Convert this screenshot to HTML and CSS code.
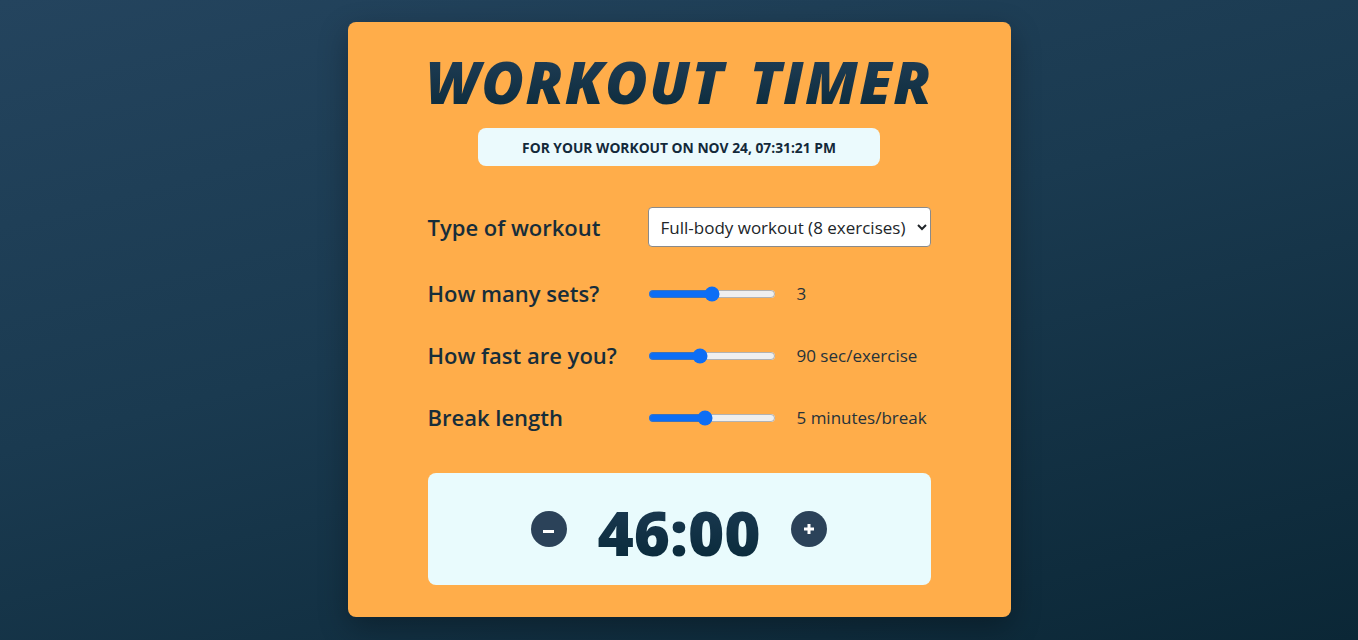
FILE: index.html
```html
<!DOCTYPE html>
<html lang="en">
<head>
<meta charset="utf-8">
<title>Workout Timer</title>
<link rel="stylesheet" href="styles.css">
</head>
<body>
<main class="card">
  <h1 class="title">WORKOUT TIMER</h1>
  <div class="subtitle-wrap">
    <p class="subtitle">For your workout on Nov 24, 07:31:21 PM</p>
  </div>
  <form class="settings">
    <label class="label" for="type">Type of workout</label>
    <select id="type" class="select">
      <option>Full-body workout (8 exercises)</option>
    </select>

    <label class="label" for="sets">How many sets?</label>
    <div class="control">
      <input id="sets" class="range" type="range" min="1" max="5" value="3">
      <span class="value">3</span>
    </div>

    <label class="label" for="speed">How fast are you?</label>
    <div class="control">
      <input id="speed" class="range" type="range" min="30" max="180" step="30" value="90">
      <span class="value">90 sec/exercise</span>
    </div>

    <label class="label" for="break">Break length</label>
    <div class="control">
      <input id="break" class="range" type="range" min="1" max="10" value="5">
      <span class="value">5 minutes/break</span>
    </div>
  </form>
  <section class="timer">
    <button class="round-btn" type="button" aria-label="Decrease">
      <svg viewBox="0 0 36 36" width="36" height="36"><rect x="12" y="19" width="11" height="3" fill="#ffffff"/></svg>
    </button>
    <p class="time">46:00</p>
    <button class="round-btn" type="button" aria-label="Increase">
      <svg viewBox="0 0 36 36" width="36" height="36"><rect x="13" y="16.5" width="10" height="3" fill="#ffffff"/><rect x="16.5" y="13" width="3" height="10" fill="#ffffff"/></svg>
    </button>
  </section>
</main>
</body>
</html>
```

FILE: styles.css
```css
* { box-sizing: border-box; }

html, body { height: 100%; }

body {
  margin: 0;
  min-height: 640px;
  background: linear-gradient(165deg, #24445e 0%, #1a3a50 45%, #0b2736 100%);
  display: flex;
  justify-content: center;
  align-items: flex-start;
  padding-top: 22px;
  font-family: "Open Sans", "Noto Sans", "Liberation Sans", sans-serif;
  color: #1b2f3b;
}

.card {
  width: 663px;
  background: #ffad4a;
  border-radius: 8px;
  padding: 26px 80px 32px;
  box-shadow: 0 10px 30px rgba(0, 0, 0, 0.3);
}

.title {
  margin: 0 -20px;
  text-align: center;
  white-space: nowrap;
  font-family: "Open Sans", "Noto Sans", sans-serif;
  font-style: italic;
  font-weight: 800;
  font-stretch: 100%;
  font-size: 58px;
  line-height: 68px;
  letter-spacing: 1.5px;
  word-spacing: 8px;
  background: linear-gradient(180deg, #223f58 0%, #0b2a3a 100%);
  -webkit-background-clip: text;
  background-clip: text;
  color: transparent;
}

.subtitle-wrap {
  display: flex;
  justify-content: center;
  margin-top: 12px;
}

.subtitle {
  margin: 0;
  width: 402px;
  height: 38px;
  display: flex;
  align-items: center;
  justify-content: center;
  background: #ebfafd;
  border-radius: 8px;
  font-size: 13.8px;
  font-weight: 700;
  text-transform: uppercase;
  color: #13293a;
}

.settings {
  margin-top: 41px;
  display: grid;
  grid-template-columns: 220px 1fr;
  row-gap: 31px;
  align-items: center;
}

.label {
  font-size: 22px;
  font-weight: 600;
  line-height: 31px;
  color: #172d3a;
}

.select {
  width: 283px;
  height: 40px;
  font-family: "Open Sans", "Noto Sans", sans-serif;
  font-size: 17px;
  color: #212529;
  background: #ffffff;
  border: 1px solid #8a8a8a;
  border-radius: 4px;
  padding: 0 4px 0 8px;
}

.control {
  display: flex;
  align-items: center;
  gap: 21px;
}

.range {
  width: 128px;
  margin: 0;
  accent-color: #0d6ef5;
}

.value {
  font-size: 17px;
  color: #26323a;
}

.timer {
  margin-top: 40px;
  height: 112px;
  background: #e9fbfd;
  border-radius: 8px;
  display: flex;
  align-items: center;
  justify-content: center;
  gap: 30px;
}

.round-btn {
  width: 36px;
  height: 36px;
  border-radius: 50%;
  border: none;
  padding: 0;
  background: #2b4259;
  display: flex;
  align-items: center;
  justify-content: center;
  cursor: pointer;
}

.round-btn svg { display: block; }

.time {
  margin: 0;
  font-size: 62px;
  font-weight: 800;
  font-stretch: 95%;
  line-height: 1;
  background: linear-gradient(180deg, #1d3b54 0%, #092a3a 100%);
  -webkit-background-clip: text;
  background-clip: text;
  color: transparent;
  padding-top: 6px;
}
```
